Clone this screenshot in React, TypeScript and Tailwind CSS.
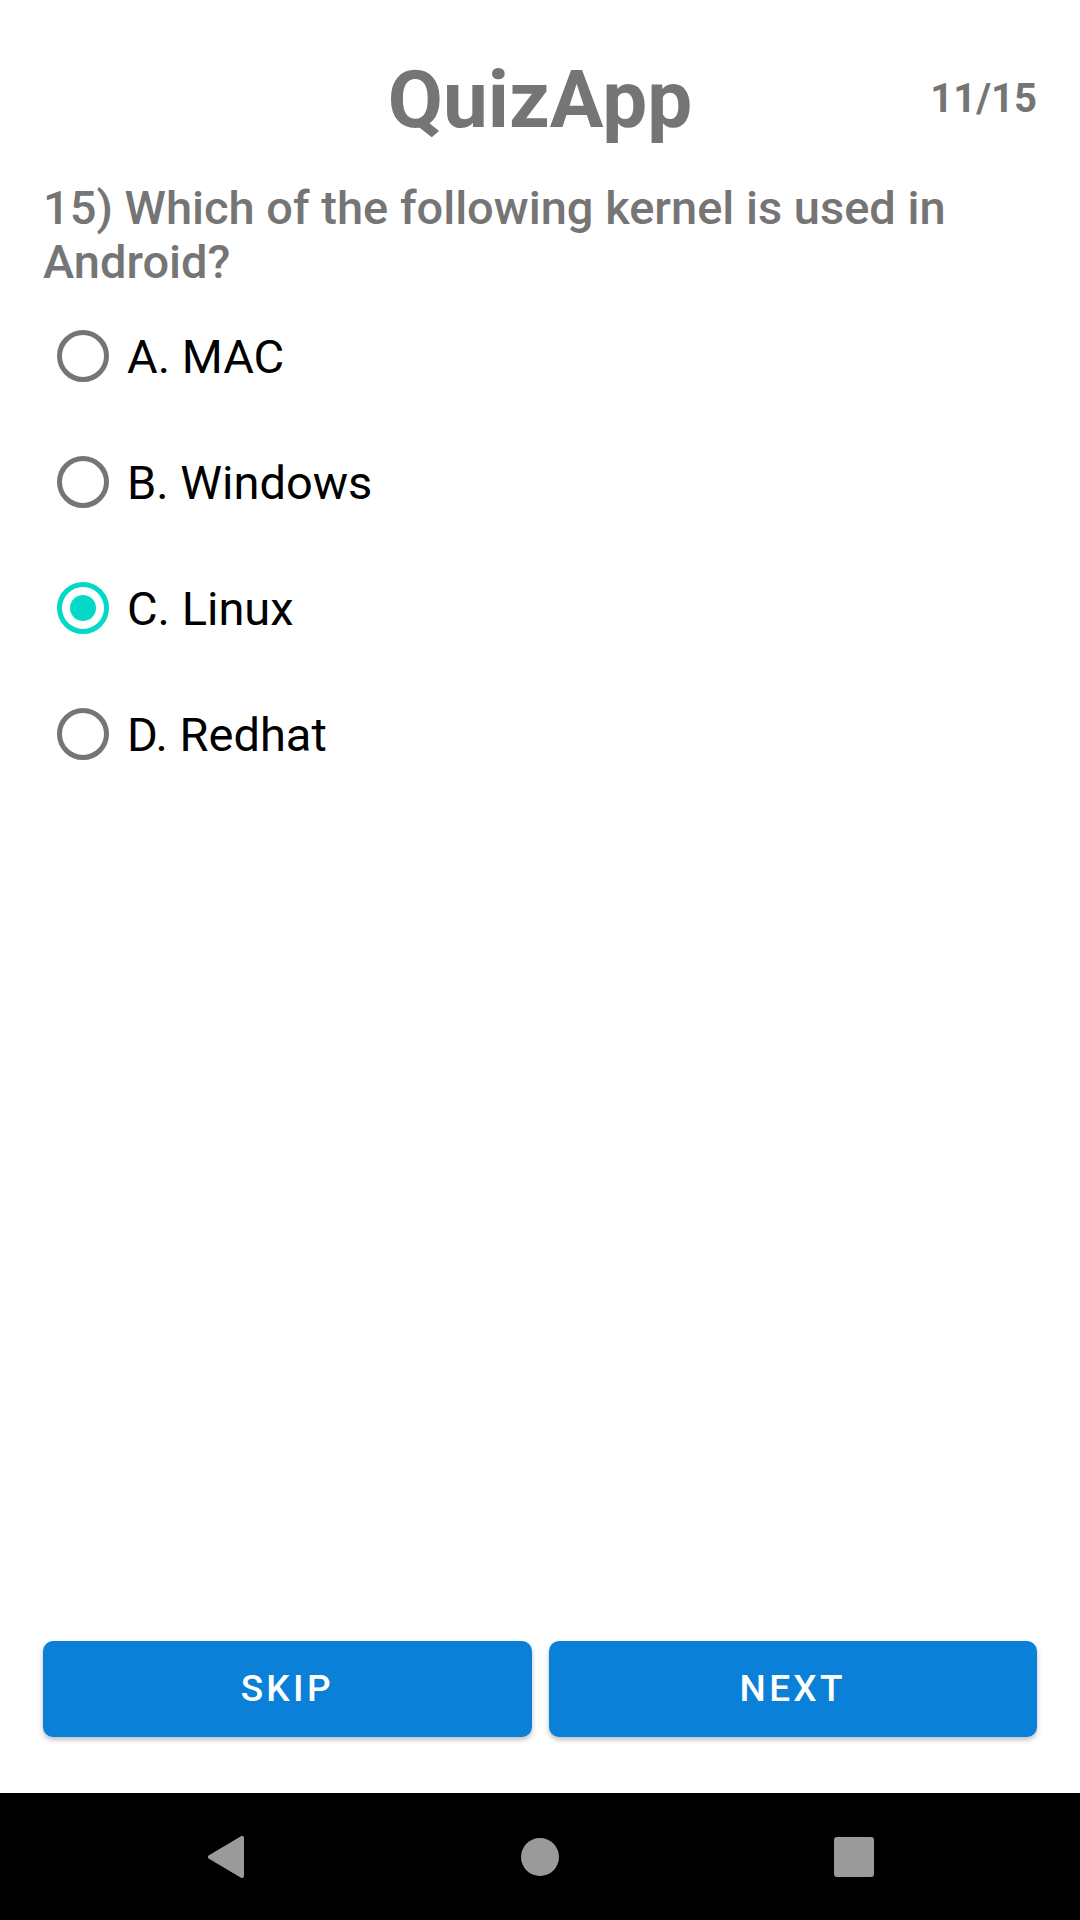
import { useState } from "react";

// Quiz data for the current question
const QUESTION = "15) Which of the following kernel is used in Android?";
const OPTIONS = ["A. MAC", "B. Windows", "C. Linux", "D. Redhat"];

const RadioCircle = ({ checked }: { checked: boolean }) => (
  <span
    className={
      checked
        ? "ml-[14px] flex h-[52px] w-[52px] items-center justify-center rounded-full border-[5px] border-[#03dac5]"
        : "ml-[14px] flex h-[52px] w-[52px] items-center justify-center rounded-full border-[5px] border-[#757575]"
    }
  >
    {checked && <span className="h-[26px] w-[26px] rounded-full bg-[#03dac5]" />}
  </span>
);

export default function App() {
  const [selected, setSelected] = useState(2);

  return (
    <div className="flex h-[1920px] w-[1080px] flex-col bg-white font-['Roboto','Liberation_Sans',sans-serif]">
      {/* =============== Quiz content =============== */}
      <main className="flex flex-1 flex-col px-[43px] pb-[56px]">
        {/* Header */}
        <header className="grid grid-cols-[1fr_auto_1fr] items-start pt-[53px]">
          <div />
          <h1 className="text-[80px] font-bold leading-[94px] text-[#757575]">QuizApp</h1>
          <span className="mt-[22px] justify-self-end text-[40px] font-bold leading-[47px] text-[#757575]">
            11/15
          </span>
        </header>

        {/* Question */}
        <p className="mt-[34px] text-[47px] font-medium leading-[54px] text-[#757575]">{QUESTION}</p>

        {/* Options */}
        <div className="mt-[4px] flex flex-col">
          {OPTIONS.map((opt, i) => (
            <button
              key={opt}
              type="button"
              onClick={() => setSelected(i)}
              className="flex h-[126px] items-center gap-[18px] text-left"
            >
              <RadioCircle checked={selected === i} />
              <span className="text-[47px] leading-[55px] text-black">{opt}</span>
            </button>
          ))}
        </div>

        <div className="flex-1" />

        {/* Action buttons */}
        <div className="flex gap-[17px]">
          <button
            type="button"
            className="flex h-[96px] flex-1 items-center justify-center rounded-[10px] bg-[#0b80d8] text-[37px] font-medium tracking-[0.09em] text-white shadow-[0_3px_5px_rgba(0,0,0,0.25)]"
          >
            SKIP
          </button>
          <button
            type="button"
            className="flex h-[96px] flex-1 items-center justify-center rounded-[10px] bg-[#0b80d8] text-[37px] font-medium tracking-[0.09em] text-white shadow-[0_3px_5px_rgba(0,0,0,0.25)]"
          >
            NEXT
          </button>
        </div>
      </main>

      {/* =============== System navigation bar =============== */}
      <nav className="flex h-[127px] items-center justify-center bg-black">
        <div className="flex w-[314px] justify-center">
          <svg width="36" height="42" viewBox="0 0 36 42">
            <polygon points="34,2 34,40 2,21" fill="#9a9a9a" stroke="#9a9a9a" strokeWidth="4" strokeLinejoin="round" />
          </svg>
        </div>
        <div className="flex w-[314px] justify-center">
          <span className="h-[38px] w-[38px] rounded-full bg-[#9a9a9a]" />
        </div>
        <div className="flex w-[314px] justify-center">
          <span className="h-[40px] w-[40px] rounded-[3px] bg-[#9a9a9a]" />
        </div>
      </nav>
    </div>
  );
}
